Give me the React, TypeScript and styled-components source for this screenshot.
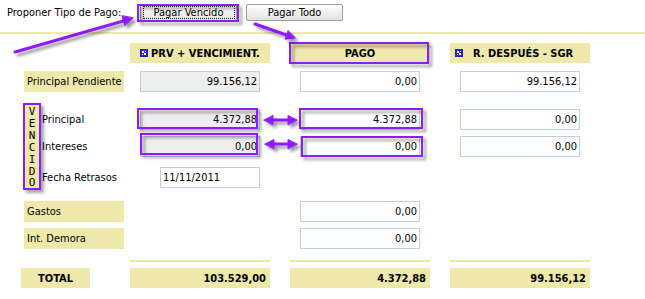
import React from 'react';
import styled, { createGlobalStyle } from 'styled-components';

const BEIGE = '#eee8aa';
const PURPLE = '#8c1cff';
const FIELD_BORDER = '#c2cde2';

const Global = createGlobalStyle`
  html, body { margin: 0; padding: 0; background: #fff; }
  body {
    font-family: "DejaVu Sans Condensed", "DejaVu Sans", sans-serif;
    font-size: 11px;
    color: #000;
  }
`;

const Page = styled.div`
  position: relative;
  width: 645px;
  height: 299px;
  overflow: hidden;
`;

const TopBar = styled.div`
  display: flex;
  align-items: center;
  height: 17px;
  padding: 4px 0 0 7px;
`;

const TopLabel = styled.span`
  width: 133px;
`;

const Button = styled.button<{ $focused?: boolean }>`
  position: relative;
  width: 97px;
  height: 17px;
  margin: 0 9px 0 0;
  padding: 0;
  font: inherit;
  color: #000;
  background: linear-gradient(#fefefe, #e2e2e2);
  border: 1px solid #9c9c9c;
  border-radius: 2px;
  &::after {
    content: '';
    display: ${p => (p.$focused ? 'block' : 'none')};
    position: absolute;
    inset: 1px 1px 1px 2px;
    border: 1px dotted #222;
  }
`;

const Divider = styled.div`
  margin-top: 11px;
  height: 2px;
  background: ${BEIGE};
`;

const Row = styled.div<{ $mt: number; $h?: number }>`
  display: grid;
  grid-template-columns: 130px 160px 160px 140px;
  margin-top: ${p => p.$mt}px;
  height: ${p => p.$h ?? 21}px;
`;

const HeaderBox = styled.div<{ $align?: 'center' | 'start' }>`
  width: 140px;
  box-sizing: border-box;
  background: ${BEIGE};
  font-weight: bold;
  display: flex;
  align-items: center;
  justify-content: ${p => (p.$align === 'start' ? 'flex-start' : 'center')};
  padding-left: ${p => (p.$align === 'start' ? '5px' : '0')};
`;

const HeaderIcon = styled.svg<{ $gap: number }>`
  width: 8px;
  height: 8px;
  margin-right: ${p => p.$gap}px;
  flex: none;
`;

const LabelBox = styled.div`
  margin-left: 24px;
  width: 100px;
  box-sizing: border-box;
  padding-left: 3px;
  background: ${BEIGE};
  display: flex;
  align-items: center;
`;

const Field = styled.input<{ $off?: number; $w?: number; $gray?: boolean; $left?: boolean }>`
  margin: 0 0 0 ${p => p.$off ?? 10}px;
  width: ${p => p.$w ?? 120}px;
  height: 21px;
  box-sizing: border-box;
  border: 1px solid ${FIELD_BORDER};
  background: ${p => (p.$gray ? '#eeeeee' : '#fff')};
  font: inherit;
  color: #000;
  text-align: ${p => (p.$left ? 'left' : 'right')};
  padding: 0 ${p => (p.$left ? '0 0 2px' : '2px 0 0')};
  outline: none;
`;

const VencidoSection = styled.div`
  display: flex;
  margin-top: 11px;
`;

const VTag = styled.div`
  margin-left: 23px;
  width: 18px;
  height: 87px;
  box-sizing: border-box;
  border: 2px solid ${PURPLE};
  background: ${BEIGE};
  box-shadow: 3px 3px 3px rgba(0, 0, 0, 0.35);
  display: flex;
  flex-direction: column;
  align-items: center;
  padding-top: 1px;
  font-family: "DejaVu Sans Mono", monospace;
  font-size: 11px;
  line-height: 11.9px;
`;

const VRows = styled.div`
  display: flex;
  flex-direction: column;
  margin-left: 1px;
  padding-top: 6px;
`;

const VRow = styled.div<{ $mt: number }>`
  display: grid;
  grid-template-columns: 88px 160px 160px 140px;
  margin-top: ${p => p.$mt}px;
  height: 21px;
`;

const PlainLabel = styled.div`
  display: flex;
  align-items: center;
`;

const Rule = styled.div`
  width: 140px;
  background: ${BEIGE};
`;

const TotalLabel = styled.div`
  margin-left: 21px;
  width: 69px;
  background: ${BEIGE};
  font-weight: bold;
  display: flex;
  align-items: center;
  justify-content: center;
`;

const TotalValue = styled.div`
  width: 140px;
  box-sizing: border-box;
  padding-right: 4px;
  background: ${BEIGE};
  font-weight: bold;
  display: flex;
  align-items: center;
  justify-content: flex-end;
`;

const Overlay = styled.svg`
  position: absolute;
  left: 0;
  top: 0;
  width: 645px;
  height: 299px;
  pointer-events: none;
`;

const Icon: React.FC<{ gap: number }> = ({ gap }) => (
  <HeaderIcon $gap={gap} viewBox="0 0 8 8">
    <rect x="0" y="0" width="8" height="8" fill="#1c1cc8" />
    <rect x="1" y="1" width="6" height="6" fill="#2a2ae0" />
    <rect x="2" y="2" width="2" height="2" fill="#fff" />
    <rect x="4" y="4" width="2" height="2" fill="#fff" />
    <rect x="2" y="5" width="1" height="1" fill="#fff" />
    <rect x="5" y="2" width="1" height="1" fill="#fff" />
  </HeaderIcon>
);

const Annotations: React.FC = () => (
  <Overlay viewBox="0 0 645 299">
    <defs>
      <filter id="sh" x="-20%" y="-50%" width="150%" height="250%">
        <feDropShadow dx="3" dy="3" stdDeviation="1.4" floodColor="#000" floodOpacity="0.4" />
      </filter>
    </defs>
    <g filter="url(#sh)" stroke={PURPLE} fill="none" strokeWidth="2">
      <rect x="138" y="5" width="100" height="16" />
      <rect x="290" y="43" width="138" height="20" />
      <rect x="138" y="109" width="119" height="19" />
      <rect x="141" y="134" width="116" height="20" />
      <rect x="300" y="109" width="122" height="19" />
      <rect x="302" y="137" width="120" height="19" />
    </g>
    <g filter="url(#sh)" fill={PURPLE} stroke={PURPLE} strokeLinecap="round">
      <line x1="15" y1="52" x2="125" y2="20.5" strokeWidth="3" />
      <polygon points="133,18 124.8,25.6 122,16" strokeWidth="1" />
      <line x1="255" y1="24" x2="288" y2="35.5" strokeWidth="3" />
      <polygon points="295,38 285,39.2 288,30.8" strokeWidth="1" />
      <line x1="270" y1="120" x2="291" y2="120" strokeWidth="3" strokeLinecap="butt" />
      <polygon points="264,120 273,115.5 273,124.5" strokeWidth="1" />
      <polygon points="297,120 288,115.5 288,124.5" strokeWidth="1" />
      <line x1="271" y1="144" x2="291" y2="144" strokeWidth="3" strokeLinecap="butt" />
      <polygon points="265,144 274,139.5 274,148.5" strokeWidth="1" />
      <polygon points="297,144 288,139.5 288,148.5" strokeWidth="1" />
    </g>
  </Overlay>
);

export default function App() {
  return (
    <Page>
      <Global />
      <TopBar>
        <TopLabel>Proponer Tipo de Pago:</TopLabel>
        <Button $focused>Pagar Vencido</Button>
        <Button>Pagar Todo</Button>
      </TopBar>
      <Divider />

      <Row $mt={9} $h={20}>
        <div />
        <HeaderBox>
          <Icon gap={3} />
          PRV + VENCIMIENT.
        </HeaderBox>
        <HeaderBox>PAGO</HeaderBox>
        <HeaderBox $align="start">
          <Icon gap={10} />
          R. DESPUÉS - SGR
        </HeaderBox>
      </Row>

      <Row $mt={8}>
        <LabelBox>Principal Pendiente</LabelBox>
        <Field $gray readOnly value="99.156,12" />
        <Field readOnly value="0,00" />
        <Field readOnly value="99.156,12" />
      </Row>

      <VencidoSection>
        <VTag>
          {'VENCIDO'.split('').map((c, i) => (
            <span key={i}>{c}</span>
          ))}
        </VTag>
        <VRows>
          <VRow $mt={0}>
            <PlainLabel>Principal</PlainLabel>
            <Field $gray readOnly value="4.372,88" />
            <Field readOnly value="4.372,88" />
            <Field readOnly value="0,00" />
          </VRow>
          <VRow $mt={6}>
            <PlainLabel>Intereses</PlainLabel>
            <Field $gray readOnly value="0,00" />
            <Field readOnly value="0,00" />
            <Field readOnly value="0,00" />
          </VRow>
          <VRow $mt={10}>
            <PlainLabel>Fecha Retrasos</PlainLabel>
            <Field $off={30} $w={100} $left readOnly value="11/11/2011" />
          </VRow>
        </VRows>
      </VencidoSection>

      <Row $mt={11}>
        <LabelBox>Gastos</LabelBox>
        <div />
        <Field readOnly value="0,00" />
      </Row>
      <Row $mt={6}>
        <LabelBox>Int. Demora</LabelBox>
        <div />
        <Field readOnly value="0,00" />
      </Row>

      <Row $mt={11} $h={2}>
        <div />
        <Rule />
        <Rule />
        <Rule />
      </Row>
      <Row $mt={6} $h={20}>
        <TotalLabel>TOTAL</TotalLabel>
        <TotalValue>103.529,00</TotalValue>
        <TotalValue>4.372,88</TotalValue>
        <TotalValue>99.156,12</TotalValue>
      </Row>

      <Annotations />
    </Page>
  );
}
